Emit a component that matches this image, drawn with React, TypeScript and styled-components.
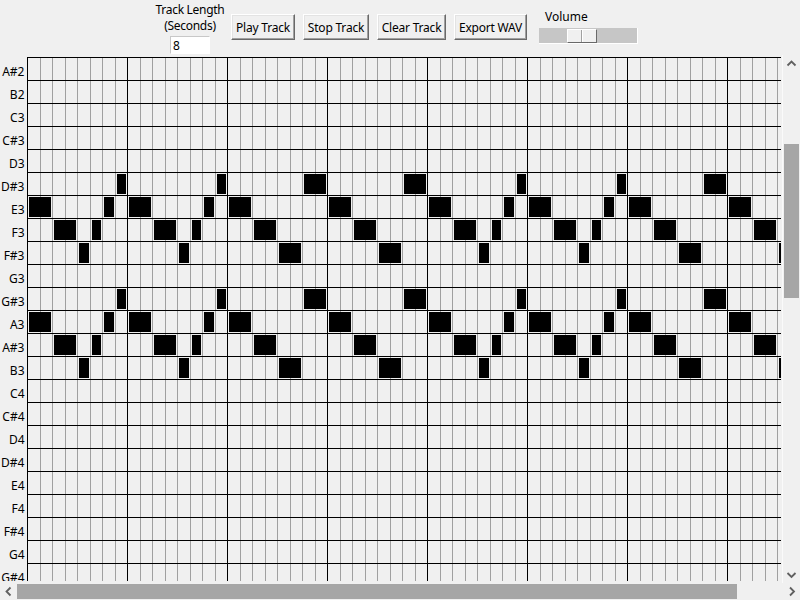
import React from "react";
import styled, { createGlobalStyle } from "styled-components";

const FONT = `"Noto Sans", "Liberation Sans", sans-serif`;

const Global = createGlobalStyle`
  html, body { margin: 0; padding: 0; background: #f0f0f0; overflow: hidden; }
  #root { width: 800px; height: 600px; }
`;

const Window = styled.div`
  width: 800px;
  height: 600px;
  display: flex;
  flex-direction: column;
  background: #f0f0f0;
  font-family: ${FONT};
  font-size: 12px;
  color: #000;
`;

const TopBar = styled.div`
  height: 55px;
  flex: none;
  display: flex;
  align-items: flex-start;
  padding-left: 155px;
  box-sizing: border-box;
`;

const LengthGroup = styled.div`
  width: 70px;
  display: flex;
  flex-direction: column;
  align-items: center;
  padding-top: 2px;
`;

const Caption = styled.div`
  line-height: 16px;
  white-space: nowrap;
  text-align: center;
  letter-spacing: -0.3px;
`;

const Entry = styled.input`
  width: 40px;
  height: 18px;
  box-sizing: border-box;
  margin: 2px 0 0 0;
  padding: 0 0 0 2px;
  border: 1px solid #ffffff;
  border-top-color: #c8c8c8;
  border-left-color: #c8c8c8;
  background: #ffffff;
  font: 12px ${FONT};
  color: #000;
  outline: none;
`;

const ToolButton = styled.button<{ $w: number }>`
  width: ${(p) => p.$w}px;
  height: 26px;
  margin: 14px 0 0 8px;
  padding: 0;
  box-sizing: border-box;
  background: #f0f0f0;
  font: 12px ${FONT};
  letter-spacing: -0.2px;
  color: #000;
  white-space: nowrap;
  border: 1px solid;
  border-color: #ffffff #696969 #696969 #ffffff;
  box-shadow: inset -1px -1px 0 #a0a0a0, inset 1px 1px 0 #e3e3e3;
  &:first-of-type {
    margin-left: 6px;
  }
`;

const VolumeGroup = styled.div`
  margin-left: 12px;
  width: 99px;
  display: flex;
  flex-direction: column;
  padding-top: 9px;
`;

const VolumeLabel = styled.div`
  line-height: 16px;
  padding-left: 6px;
`;

const Trough = styled.div`
  position: relative;
  margin-top: 3px;
  width: 99px;
  height: 16px;
  box-sizing: border-box;
  background: #c6c6c6;
  border-right: 1px solid #ffffff;
  border-bottom: 1px solid #ffffff;
`;

const SliderThumb = styled.div<{ $left: number }>`
  position: absolute;
  left: ${(p) => p.$left}px;
  top: 1px;
  width: 30px;
  height: 14px;
  box-sizing: border-box;
  background: #f0f0f0;
  border: 1px solid;
  border-color: #ffffff #696969 #696969 #ffffff;
  &::after {
    content: "";
    position: absolute;
    left: 13px;
    top: 0;
    bottom: 0;
    width: 1px;
    background: #a0a0a0;
    box-shadow: 1px 0 0 #ffffff;
  }
`;

const CanvasRow = styled.div`
  display: flex;
  height: 528px;
  flex: none;
`;

const Viewport = styled.div`
  width: 782px;
  height: 528px;
  overflow: hidden;
  background: #f0f0f0;
  flex: none;
  border-right: 1px solid #fafafa;
`;

const GridSvg = styled.svg`
  display: block;
  shape-rendering: crispEdges;
`;

const NoteLabel = styled.text`
  font-family: ${FONT};
  font-size: 12px;
  fill: #000;
`;

const VScroll = styled.div`
  width: 17px;
  display: flex;
  flex-direction: column;
  background: #f0f0f0;
`;

const ArrowBox = styled.div`
  width: 17px;
  height: 17px;
  flex: none;
  display: flex;
  align-items: center;
  justify-content: center;
`;

const VTrack = styled.div`
  flex: 1;
`;

const VThumb = styled.div<{ $top: number; $len: number }>`
  margin: ${(p) => p.$top}px 0 0 1px;
  width: 15px;
  height: ${(p) => p.$len}px;
  background: #a6a6a6;
`;

const HScroll = styled.div`
  height: 17px;
  flex: none;
  display: flex;
  background: #f0f0f0;
`;

const HTrack = styled.div`
  flex: 1;
  display: flex;
`;

const HThumb = styled.div<{ $left: number; $len: number }>`
  margin: 1px 0 0 ${(p) => p.$left}px;
  width: ${(p) => p.$len}px;
  height: 15px;
  background: #a6a6a6;
`;

const NOTES = [
  "A#2", "B2", "C3", "C#3", "D3", "D#3", "E3", "F3", "F#3", "G3", "G#3", "A3",
  "A#3", "B3", "C4", "C#4", "D4", "D#4", "E4", "F4", "F#4", "G4", "G#4",
];

const ROW_H = 23;
const COL_W = 12.5;
const X0 = 27.5;
const Y0 = 2.5;
const VIEW_W = 781;
const VIEW_H = 526;
const COLS = 64;

// [row, colOffset, length]
const PATTERN_A: [number, number, number][] = [
  [6, 0, 2], [7, 2, 2], [8, 4, 1], [7, 5, 1], [6, 6, 1], [5, 7, 1],
];
const PATTERN_B: [number, number, number][] = [
  [6, 0, 2], [7, 2, 2], [8, 4, 2], [5, 6, 2],
];
const MEASURES = ["A", "A", "B", "B", "A", "A", "B", "B"];

const notes: { r: number; c: number; n: number }[] = [];
MEASURES.forEach((m, mi) => {
  const pat = m === "A" ? PATTERN_A : PATTERN_B;
  [0, 5].forEach((shift) => {
    pat.forEach(([r, c, n]) => notes.push({ r: r + shift, c: mi * 8 + c, n }));
  });
});

const Chevron: React.FC<{ dir: "up" | "down" | "left" | "right" }> = ({ dir }) => {
  const pts = {
    up: "4.5,10.5 8.5,6.5 12.5,10.5",
    down: "4.5,7 8.5,11 12.5,7",
    left: "10.5,4.5 6.5,8.5 10.5,12.5",
    right: "7,4.5 11,8.5 7,12.5",
  }[dir];
  return (
    <svg width="17" height="17" viewBox="0 0 17 17">
      <polyline points={pts} fill="none" stroke="#606060" strokeWidth="1.8" />
    </svg>
  );
};

const PianoRoll: React.FC = () => {
  const gray: React.ReactNode[] = [];
  const black: React.ReactNode[] = [];
  for (let c = 0; c <= COLS; c++) {
    const x = X0 + c * COL_W;
    if (x > VIEW_W) break;
    const line = (
      <line key={`v${c}`} x1={x} y1={Y0 - 0.5} x2={x} y2={VIEW_H}
        stroke={c % 8 === 0 ? "#000" : "#a0a0a0"} strokeWidth="1" />
    );
    if (c % 8 === 0) black.push(line);
    else gray.push(line);
  }
  const rows: React.ReactNode[] = [];
  for (let k = 0; k <= NOTES.length; k++) {
    const y = Y0 + k * ROW_H;
    rows.push(<line key={`h${k}`} x1={X0 - 0.5} y1={y} x2={VIEW_W} y2={y} stroke="#000" strokeWidth="1" />);
  }
  return (
    <GridSvg width={VIEW_W} height={VIEW_H} viewBox={`0 0 ${VIEW_W} ${VIEW_H}`}>
      {NOTES.map((name, i) => (
        <NoteLabel key={name} x="24.5" y={i * ROW_H + 20.5} textAnchor="end">
          {name}
        </NoteLabel>
      ))}
      {gray}
      {rows}
      {black}
      {notes.map((nt, i) => (
        <rect key={i} x={29 + nt.c * COL_W} y={4 + nt.r * ROW_H}
          width={nt.n * COL_W - 3} height={20} fill="#000" />
      ))}
    </GridSvg>
  );
};

export default function App() {
  return (
    <>
      <Global />
      <Window>
        <TopBar>
          <LengthGroup>
            <Caption>Track Length</Caption>
            <Caption>(Seconds)</Caption>
            <Entry defaultValue="8" />
          </LengthGroup>
          <ToolButton $w={64}>Play Track</ToolButton>
          <ToolButton $w={66}>Stop Track</ToolButton>
          <ToolButton $w={69}>Clear Track</ToolButton>
          <ToolButton $w={73}>Export WAV</ToolButton>
          <VolumeGroup>
            <VolumeLabel>Volume</VolumeLabel>
            <Trough>
              <SliderThumb $left={28} />
            </Trough>
          </VolumeGroup>
        </TopBar>
        <CanvasRow>
          <Viewport>
            <PianoRoll />
          </Viewport>
          <VScroll>
            <ArrowBox><Chevron dir="up" /></ArrowBox>
            <VTrack>
              <VThumb $top={72} $len={154} />
            </VTrack>
            <ArrowBox><Chevron dir="down" /></ArrowBox>
          </VScroll>
        </CanvasRow>
        <HScroll>
          <ArrowBox><Chevron dir="left" /></ArrowBox>
          <HTrack>
            <HThumb $left={0} $len={720} />
          </HTrack>
          <ArrowBox><Chevron dir="right" /></ArrowBox>
        </HScroll>
      </Window>
    </>
  );
}
